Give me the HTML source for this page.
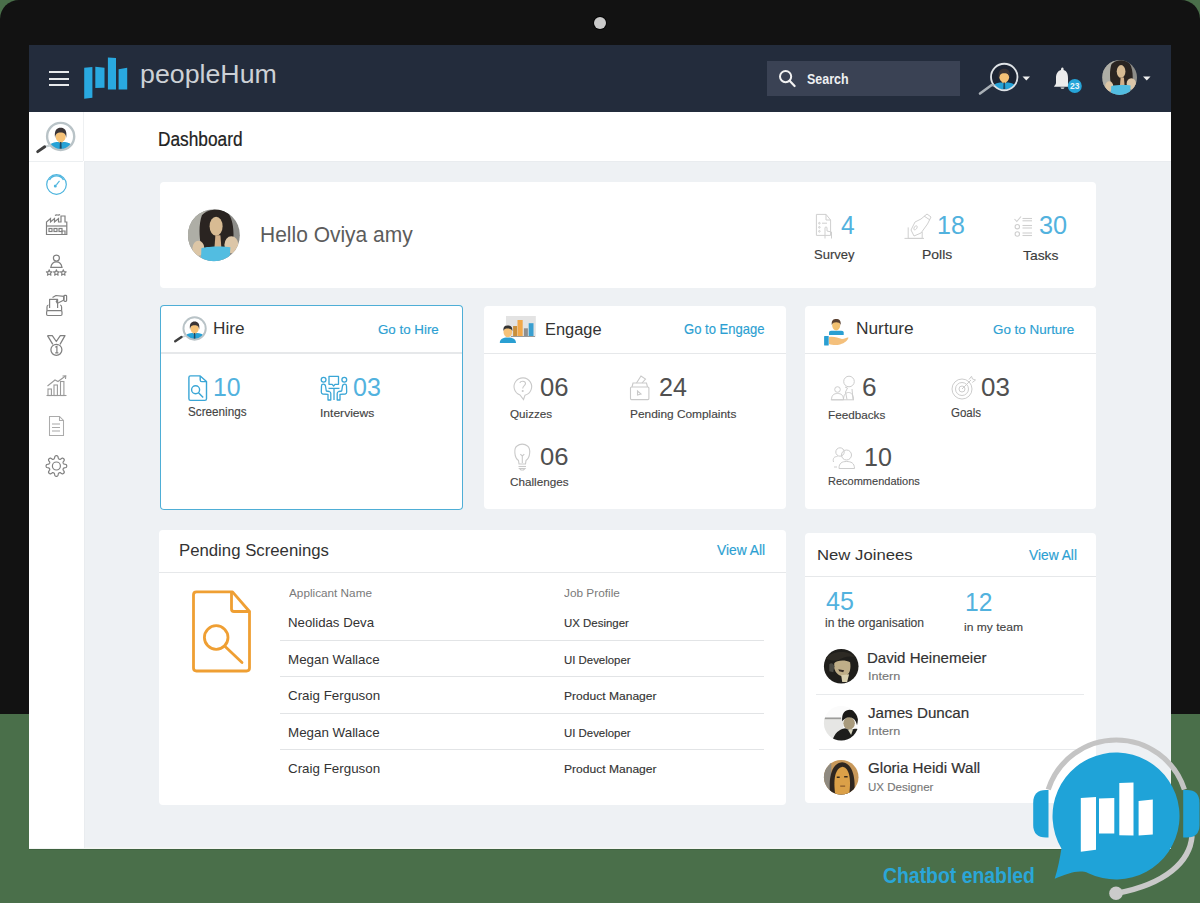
<!DOCTYPE html>
<html><head><meta charset="utf-8"><style>
html,body{margin:0;padding:0}
body{width:1200px;height:903px;position:relative;overflow:hidden;background:#4a6f4a;font-family:"Liberation Sans",sans-serif}
.a{position:absolute}
.t{position:absolute;white-space:nowrap;transform-origin:0 0}
svg{position:absolute;overflow:visible}
</style></head><body>
<div class="a" style="left:0px;top:0px;width:1200px;height:714px;background:#121212;border-radius:19px 19px 0 0"></div>
<div class="a" style="left:594px;top:17px;width:12px;height:12px;border-radius:50%;background:#c9c9c9;box-shadow:0 0 0 1px #050505"></div>
<div class="a" style="left:29px;top:45px;width:1142px;height:803px;background:#eef1f4"></div>
<div class="a" style="left:29px;top:847px;width:1142px;height:1.5px;background:#f3f5f3"></div>
<div class="a" style="left:29px;top:848.5px;width:1142px;height:1.0px;background:#3f6240"></div>
<div class="a" style="left:29px;top:45px;width:1142px;height:67px;background:#232c3c"></div>
<div class="a" style="left:29px;top:112px;width:55px;height:736px;background:#fff;border-right:1px solid #e9ecef"></div>
<div class="a" style="left:29px;top:161px;width:54px;height:1px;background:#eceff1"></div>
<div class="a" style="left:83px;top:112px;width:1px;height:49px;background:#eef0f2"></div>
<div class="a" style="left:84px;top:160.5px;width:1087px;height:1.5px;background:#e9ecef"></div>
<div class="a" style="left:84px;top:112px;width:1087px;height:49px;background:#fff"></div>
<div class="a" style="left:160px;top:182px;width:936px;height:106px;background:#fff;border-radius:4px;"></div>
<div class="a" style="left:160px;top:305px;width:303px;height:205px;background:#fff;border-radius:4px;box-shadow:inset 0 0 0 1px #4eaed6;"></div>
<div class="a" style="left:161px;top:352px;width:301px;height:1.5px;background:#e6e8ea"></div>
<div class="a" style="left:484px;top:306px;width:302px;height:203px;background:#fff;border-radius:4px;"></div>
<div class="a" style="left:484px;top:352.5px;width:302px;height:1.5px;background:#e6e8ea"></div>
<div class="a" style="left:805px;top:306px;width:291px;height:203px;background:#fff;border-radius:4px;"></div>
<div class="a" style="left:805px;top:352.5px;width:291px;height:1.5px;background:#e6e8ea"></div>
<div class="a" style="left:159px;top:530px;width:627px;height:275px;background:#fff;border-radius:4px;"></div>
<div class="a" style="left:159px;top:571.5px;width:627px;height:1.5px;background:#e6e8ea"></div>
<div class="a" style="left:805px;top:533px;width:291px;height:270px;background:#fff;border-radius:4px;"></div>
<div class="a" style="left:805px;top:575.5px;width:291px;height:1.5px;background:#e6e8ea"></div>
<div class="a" style="left:49px;top:71px;width:20px;height:2px;background:#e8eaec"></div>
<div class="a" style="left:49px;top:77.5px;width:20px;height:2.0px;background:#e8eaec"></div>
<div class="a" style="left:49px;top:84px;width:20px;height:2px;background:#e8eaec"></div>
<div class="a" style="left:767px;top:61px;width:193px;height:35px;background:#3a4254"></div>
<span class="t" style="left:806.64px;top:71.64px;font-size:14.48px;line-height:14.48px;color:#eef0f2;font-weight:bold;transform:scaleX(0.8618);">Search</span>
<span class="t" style="left:140.29px;top:62.05px;font-size:25.93px;line-height:25.93px;color:#cdd1d6;font-weight:normal;transform:scaleX(1.0322);">peopleHum</span>
<span class="t" style="left:157.88px;top:129.02px;font-size:20.41px;line-height:20.41px;color:#222;font-weight:normal;transform:scaleX(0.8464);-webkit-text-stroke:0.24px #222;">Dashboard</span>
<span class="t" style="left:260.28px;top:223.22px;font-size:22.90px;line-height:22.90px;color:#5c5c5c;font-weight:normal;transform:scaleX(0.9165);">Hello Oviya amy</span>
<span class="t" style="left:841.03px;top:212.92px;font-size:25.73px;line-height:25.73px;color:#52b2de;font-weight:normal;transform:scaleX(0.9563);">4</span>
<span class="t" style="left:937.30px;top:213.15px;font-size:25.93px;line-height:25.93px;color:#52b2de;font-weight:normal;transform:scaleX(0.9631);">18</span>
<span class="t" style="left:1038.84px;top:213.15px;font-size:25.93px;line-height:25.93px;color:#52b2de;font-weight:normal;transform:scaleX(0.9762);">30</span>
<span class="t" style="left:814.11px;top:248.79px;font-size:12.89px;line-height:12.89px;color:#3c3c3c;font-weight:normal;transform:scaleX(1.0121);-webkit-text-stroke:0.15px #3c3c3c;">Survey</span>
<span class="t" style="left:921.56px;top:249.19px;font-size:12.41px;line-height:12.41px;color:#3c3c3c;font-weight:normal;transform:scaleX(1.1238);-webkit-text-stroke:0.15px #3c3c3c;">Polls</span>
<span class="t" style="left:1023.19px;top:248.71px;font-size:13.10px;line-height:13.10px;color:#3c3c3c;font-weight:normal;transform:scaleX(1.0601);-webkit-text-stroke:0.16px #3c3c3c;">Tasks</span>
<span class="t" style="left:212.89px;top:320.99px;font-size:16.55px;line-height:16.55px;color:#333;font-weight:normal;transform:scaleX(1.0406);">Hire</span>
<span class="t" style="left:377.93px;top:323.66px;font-size:12.69px;line-height:12.69px;color:#2c9fd2;font-weight:normal;transform:scaleX(1.0506);-webkit-text-stroke:0.15px #2c9fd2;">Go to Hire</span>
<span class="t" style="left:212.91px;top:374.97px;font-size:25.43px;line-height:25.43px;color:#52b2de;font-weight:normal;transform:scaleX(0.9782);">10</span>
<span class="t" style="left:353.22px;top:374.97px;font-size:25.43px;line-height:25.43px;color:#52b2de;font-weight:normal;transform:scaleX(0.9860);">03</span>
<span class="t" style="left:188.27px;top:406.66px;font-size:11.86px;line-height:11.86px;color:#444;font-weight:normal;transform:scaleX(0.9866);-webkit-text-stroke:0.14px #444;">Screenings</span>
<span class="t" style="left:320.09px;top:408.23px;font-size:11.31px;line-height:11.31px;color:#444;font-weight:normal;transform:scaleX(1.0675);-webkit-text-stroke:0.14px #444;">Interviews</span>
<span class="t" style="left:544.90px;top:321.04px;font-size:17.08px;line-height:17.08px;color:#333;font-weight:normal;transform:scaleX(0.9606);">Engage</span>
<span class="t" style="left:684.35px;top:322.12px;font-size:14.33px;line-height:14.33px;color:#2c9fd2;font-weight:normal;transform:scaleX(0.9103);-webkit-text-stroke:0.17px #2c9fd2;">Go to Engage</span>
<span class="t" style="left:540.20px;top:375.17px;font-size:25.79px;line-height:25.79px;color:#505050;font-weight:normal;transform:scaleX(0.9949);">06</span>
<span class="t" style="left:658.74px;top:375.17px;font-size:25.79px;line-height:25.79px;color:#505050;font-weight:normal;transform:scaleX(0.9760);">24</span>
<span class="t" style="left:540.20px;top:444.85px;font-size:23.93px;line-height:23.93px;color:#505050;font-weight:normal;transform:scaleX(1.0723);">06</span>
<span class="t" style="left:510.25px;top:408.53px;font-size:11.31px;line-height:11.31px;color:#444;font-weight:normal;transform:scaleX(1.0322);-webkit-text-stroke:0.14px #444;">Quizzes</span>
<span class="t" style="left:629.72px;top:408.53px;font-size:11.31px;line-height:11.31px;color:#444;font-weight:normal;transform:scaleX(1.0516);-webkit-text-stroke:0.14px #444;">Pending Complaints</span>
<span class="t" style="left:510.20px;top:477.40px;font-size:11.10px;line-height:11.10px;color:#444;font-weight:normal;transform:scaleX(1.0534);-webkit-text-stroke:0.13px #444;">Challenges</span>
<span class="t" style="left:855.58px;top:321.27px;font-size:15.63px;line-height:15.63px;color:#333;font-weight:normal;transform:scaleX(1.1072);">Nurture</span>
<span class="t" style="left:993.08px;top:322.98px;font-size:13.61px;line-height:13.61px;color:#2c9fd2;font-weight:normal;transform:scaleX(0.9856);-webkit-text-stroke:0.16px #2c9fd2;">Go to Nurture</span>
<span class="t" style="left:862.46px;top:375.27px;font-size:25.79px;line-height:25.79px;color:#505050;font-weight:normal;transform:scaleX(1.0178);">6</span>
<span class="t" style="left:981.49px;top:375.17px;font-size:25.79px;line-height:25.79px;color:#505050;font-weight:normal;transform:scaleX(1.0062);">03</span>
<span class="t" style="left:864.09px;top:444.71px;font-size:24.86px;line-height:24.86px;color:#505050;font-weight:normal;transform:scaleX(1.0088);">10</span>
<span class="t" style="left:828.14px;top:408.58px;font-size:11.72px;line-height:11.72px;color:#444;font-weight:normal;transform:scaleX(0.9987);-webkit-text-stroke:0.14px #444;">Feedbacks</span>
<span class="t" style="left:951.12px;top:406.84px;font-size:12.00px;line-height:12.00px;color:#444;font-weight:normal;transform:scaleX(0.9600);-webkit-text-stroke:0.14px #444;">Goals</span>
<span class="t" style="left:828.20px;top:476.36px;font-size:11.03px;line-height:11.03px;color:#444;font-weight:normal;transform:scaleX(0.9990);-webkit-text-stroke:0.13px #444;">Recommendations</span>
<span class="t" style="left:178.63px;top:543.17px;font-size:16.69px;line-height:16.69px;color:#333;font-weight:normal;transform:scaleX(1.0039);">Pending Screenings</span>
<span class="t" style="left:717.44px;top:543.21px;font-size:14.76px;line-height:14.76px;color:#2c9fd2;font-weight:normal;transform:scaleX(0.9353);-webkit-text-stroke:0.18px #2c9fd2;">View All</span>
<span class="t" style="left:288.73px;top:587.81px;font-size:11.45px;line-height:11.45px;color:#7a7a7a;font-weight:normal;transform:scaleX(1.0276);">Applicant Name</span>
<span class="t" style="left:564.41px;top:588.01px;font-size:11.45px;line-height:11.45px;color:#7a7a7a;font-weight:normal;transform:scaleX(1.0338);">Job Profile</span>
<span class="t" style="left:287.91px;top:616.29px;font-size:13.24px;line-height:13.24px;color:#333;font-weight:normal;transform:scaleX(0.9997);">Neolidas Deva</span>
<span class="t" style="left:563.72px;top:618.16px;font-size:11.03px;line-height:11.03px;color:#333;font-weight:normal;transform:scaleX(1.0385);-webkit-text-stroke:0.13px #333;">UX Desinger</span>
<div class="a" style="left:280px;top:640px;width:484px;height:1px;background:#e2e4e6"></div>
<span class="t" style="left:287.90px;top:652.84px;font-size:13.24px;line-height:13.24px;color:#333;font-weight:normal;transform:scaleX(1.0101);">Megan Wallace</span>
<span class="t" style="left:563.72px;top:654.71px;font-size:11.03px;line-height:11.03px;color:#333;font-weight:normal;transform:scaleX(1.0352);-webkit-text-stroke:0.13px #333;">UI Developer</span>
<div class="a" style="left:280px;top:676px;width:484px;height:1px;background:#e2e4e6"></div>
<span class="t" style="left:288.32px;top:689.39px;font-size:13.24px;line-height:13.24px;color:#333;font-weight:normal;transform:scaleX(1.0098);">Craig Ferguson</span>
<span class="t" style="left:563.61px;top:691.26px;font-size:11.03px;line-height:11.03px;color:#333;font-weight:normal;transform:scaleX(1.0950);-webkit-text-stroke:0.13px #333;">Product Manager</span>
<div class="a" style="left:280px;top:713px;width:484px;height:1px;background:#e2e4e6"></div>
<span class="t" style="left:287.90px;top:725.94px;font-size:13.24px;line-height:13.24px;color:#333;font-weight:normal;transform:scaleX(1.0101);">Megan Wallace</span>
<span class="t" style="left:563.72px;top:727.81px;font-size:11.03px;line-height:11.03px;color:#333;font-weight:normal;transform:scaleX(1.0352);-webkit-text-stroke:0.13px #333;">UI Developer</span>
<div class="a" style="left:280px;top:749px;width:484px;height:1px;background:#e2e4e6"></div>
<span class="t" style="left:288.32px;top:762.49px;font-size:13.24px;line-height:13.24px;color:#333;font-weight:normal;transform:scaleX(1.0098);">Craig Ferguson</span>
<span class="t" style="left:563.61px;top:764.36px;font-size:11.03px;line-height:11.03px;color:#333;font-weight:normal;transform:scaleX(1.0950);-webkit-text-stroke:0.13px #333;">Product Manager</span>
<span class="t" style="left:817.43px;top:547.42px;font-size:15.45px;line-height:15.45px;color:#333;font-weight:normal;transform:scaleX(1.0818);">New Joinees</span>
<span class="t" style="left:1029.19px;top:547.53px;font-size:14.14px;line-height:14.14px;color:#2c9fd2;font-weight:normal;transform:scaleX(0.9743);-webkit-text-stroke:0.17px #2c9fd2;">View All</span>
<span class="t" style="left:825.67px;top:589.22px;font-size:25.44px;line-height:25.44px;color:#52b2de;font-weight:normal;transform:scaleX(0.9857);">45</span>
<span class="t" style="left:965.13px;top:589.53px;font-size:25.07px;line-height:25.07px;color:#52b2de;font-weight:normal;transform:scaleX(0.9810);">12</span>
<span class="t" style="left:825.44px;top:617.28px;font-size:12.07px;line-height:12.07px;color:#444;font-weight:normal;transform:scaleX(1.0048);-webkit-text-stroke:0.14px #444;">in the organisation</span>
<span class="t" style="left:964.19px;top:620.58px;font-size:11.72px;line-height:11.72px;color:#444;font-weight:normal;transform:scaleX(1.0310);-webkit-text-stroke:0.14px #444;">in my team</span>
<span class="t" style="left:867.47px;top:650.66px;font-size:14.34px;line-height:14.34px;color:#333;font-weight:normal;transform:scaleX(1.0497);-webkit-text-stroke:0.17px #333;">David Heinemeier</span>
<span class="t" style="left:867.54px;top:670.68px;font-size:11.48px;line-height:11.48px;color:#777;font-weight:normal;transform:scaleX(1.0995);-webkit-text-stroke:0.14px #777;">Intern</span>
<div class="a" style="left:816px;top:694px;width:268px;height:1px;background:#e8eaec"></div>
<span class="t" style="left:868.46px;top:705.72px;font-size:14.39px;line-height:14.39px;color:#333;font-weight:normal;transform:scaleX(1.0558);-webkit-text-stroke:0.17px #333;">James Duncan</span>
<span class="t" style="left:867.54px;top:726.20px;font-size:11.34px;line-height:11.34px;color:#777;font-weight:normal;transform:scaleX(1.1136);-webkit-text-stroke:0.14px #777;">Intern</span>
<div class="a" style="left:819px;top:749px;width:265px;height:1px;background:#e8eaec"></div>
<span class="t" style="left:867.94px;top:761.29px;font-size:14.07px;line-height:14.07px;color:#333;font-weight:normal;transform:scaleX(1.0771);-webkit-text-stroke:0.17px #333;">Gloria Heidi Wall</span>
<span class="t" style="left:867.81px;top:781.56px;font-size:11.03px;line-height:11.03px;color:#777;font-weight:normal;transform:scaleX(1.0483);-webkit-text-stroke:0.13px #777;">UX Designer</span>
<span class="t" style="left:883.20px;top:865.29px;font-size:22.34px;line-height:22.34px;color:#2aa6d8;font-weight:bold;transform:scaleX(0.8688);">Chatbot enabled</span>
<svg style="left:0;top:0" width="1200" height="903" viewBox="0 0 1200 903"><path d="M84.2,67.8 L92.4,67.1 L92.4,97.8 L84.2,98.7 Z" fill="#29a9e0"/><path d="M95.3,66.7 L104.5,67.8 L104.5,87.7 L95.3,88 Z" fill="#29a9e0"/><path d="M107.9,57.5 L116,58 L116,89.4 L107.9,89.4 Z" fill="#29a9e0"/><path d="M118.6,69.3 L127.2,67.8 L127.2,89.4 L118.6,89.4 Z" fill="#29a9e0"/><circle cx="785.6" cy="76.6" r="5.6" fill="none" stroke="#f2f2f2" stroke-width="2"/><line x1="789.6" y1="80.8" x2="794.6" y2="86" stroke="#f2f2f2" stroke-width="2.2" stroke-linecap="round"/><g transform="translate(1004.25,77) scale(1.0178571428571428)"><clipPath id="c1004_77"><circle r="12.6"/></clipPath><circle r="13" fill="#1c2433"/><g clip-path="url(#c1004_77)"><path d="M-11,16 L-10.5,8.5 C-9.5,6.3 -6,5.5 -3,5.3 L3,5.3 C6,5.5 9.5,6.3 10.5,8.5 L11,16 Z" fill="#27a2d6"/><rect x="-1.8" y="3" width="3.6" height="3" fill="#e9ad62"/><ellipse cx="0" cy="0.3" rx="4.8" ry="5.3" fill="#f6c277"/><path d="M-5.3,1.5 C-6.5,-6 -3.5,-8.2 0,-8.2 C3.5,-8.2 6.5,-6 5.3,1.5 C5,-2.5 3.5,-3.8 0,-3.8 C-3.5,-3.8 -5,-2.5 -5.3,1.5 Z" fill="#3a3436"/><path d="M-0.7,5.3 L0.7,5.3 L1.1,14 L-1.1,14 Z" fill="#1d4a66"/></g><circle r="13" fill="none" stroke="#dfe3e7" stroke-width="1.8"/><line x1="-9.8" y1="8.6" x2="-12.3" y2="7.9" stroke="#a9b0b6" stroke-width="2"/><line x1="-12.3" y1="7.9" x2="-23.8" y2="16.2" stroke="#a9b0b6" stroke-width="2.6" stroke-linecap="round"/></g><path d="M1022.5,76.5 L1030,76.5 L1026.25,80.5 Z" fill="#f0f0f0"/><path d="M1062.4,67.5 C1063.6,67.5 1063.8,69 1063.6,70 C1067,71 1068,74 1068,78 L1068,83 C1068,84.5 1069.5,85.5 1070,86.7 L1054,86.7 C1054.5,85.5 1056,84.5 1056,83 L1056,78 C1056,74 1057.5,71 1061,70 C1060.9,69 1061.2,67.5 1062.4,67.5 Z" fill="#ececec"/><path d="M1060.5,87.5 L1064.5,87.5 C1064.5,89.2 1060.5,89.2 1060.5,87.5 Z" fill="#ececec"/><circle cx="1074.8" cy="86" r="7" fill="#26a4d8"/><text x="1074.8" y="89" font-family="Liberation Sans" font-size="8.5" font-weight="bold" fill="#e9f6fc" text-anchor="middle">23</text><path d="M1143,76.5 L1150.5,76.5 L1146.75,80.5 Z" fill="#f0f0f0"/><g transform="translate(1119.6,77.5) scale(0.6692307692307692)"><clipPath id="wh"><circle r="26"/></clipPath><g clip-path="url(#wh)"><rect x="-26" y="-26" width="52" height="52" fill="#8d8d89"/><path d="M-26,-26 L-8,-26 L-12,26 L-26,26 Z" fill="#aeaea6"/><path d="M-12,-20 C-6,-27 10,-28 15,-21 C19,-15 20,-5 19.5,3 C18.5,10 15,13 12,14 L-1,16 C-7,18 -12,16 -13,10 C-15,0 -15,-12 -12,-20 Z" fill="#2a2421"/><ellipse cx="2.2" cy="-9" rx="6.5" ry="9.5" fill="#d8bb93"/><path d="M1.5,0 L6.5,0 L7.5,13 L0.5,13 Z" fill="#d2b08a"/><ellipse cx="-15.5" cy="13" rx="6" ry="7.5" fill="#dcc6a6"/><ellipse cx="17.5" cy="9.5" rx="7" ry="8.5" fill="#dcc6a8"/><path d="M-13,27 L-12.5,13 C-6,11 10,11 16.5,12 L15.5,27 Z" fill="#52bde1"/></g></g><g transform="translate(213.9,235.2) scale(1.0)"><clipPath id="wg"><circle r="26"/></clipPath><g clip-path="url(#wg)"><rect x="-26" y="-26" width="52" height="52" fill="#8d8d89"/><path d="M-26,-26 L-8,-26 L-12,26 L-26,26 Z" fill="#aeaea6"/><path d="M-12,-20 C-6,-27 10,-28 15,-21 C19,-15 20,-5 19.5,3 C18.5,10 15,13 12,14 L-1,16 C-7,18 -12,16 -13,10 C-15,0 -15,-12 -12,-20 Z" fill="#2a2421"/><ellipse cx="2.2" cy="-9" rx="6.5" ry="9.5" fill="#d8bb93"/><path d="M1.5,0 L6.5,0 L7.5,13 L0.5,13 Z" fill="#d2b08a"/><ellipse cx="-15.5" cy="13" rx="6" ry="7.5" fill="#dcc6a6"/><ellipse cx="17.5" cy="9.5" rx="7" ry="8.5" fill="#dcc6a8"/><path d="M-13,27 L-12.5,13 C-6,11 10,11 16.5,12 L15.5,27 Z" fill="#52bde1"/></g></g><g transform="translate(60.65,136.4) scale(1.042857142857143)"><clipPath id="c60_136"><circle r="12.6"/></clipPath><g clip-path="url(#c60_136)"><path d="M-11,16 L-10.5,8.5 C-9.5,6.3 -6,5.5 -3,5.3 L3,5.3 C6,5.5 9.5,6.3 10.5,8.5 L11,16 Z" fill="#27a2d6"/><rect x="-1.8" y="3" width="3.6" height="3" fill="#e9ad62"/><ellipse cx="0" cy="0.3" rx="4.8" ry="5.3" fill="#f6c277"/><path d="M-5.3,1.5 C-6.5,-6 -3.5,-8.2 0,-8.2 C3.5,-8.2 6.5,-6 5.3,1.5 C5,-2.5 3.5,-3.8 0,-3.8 C-3.5,-3.8 -5,-2.5 -5.3,1.5 Z" fill="#3a3436"/><path d="M-0.7,5.3 L0.7,5.3 L1.1,14 L-1.1,14 Z" fill="#1d4a66"/></g><circle r="13" fill="none" stroke="#b9c3c7" stroke-width="2.3"/><line x1="-9.8" y1="8.6" x2="-15.3" y2="9.9" stroke="#c9d1d4" stroke-width="2"/><line x1="-15.3" y1="9.9" x2="-22" y2="14.6" stroke="#3f3f3f" stroke-width="2.8" stroke-linecap="round"/></g><circle cx="56.5" cy="184.5" r="9.8" fill="none" stroke="#4cb4de" stroke-width="1.2"/><path d="M49.5,180 A8,8 0 0 1 63.5,180" fill="none" stroke="#4cb4de" stroke-width="1.4"/><circle cx="55.3" cy="186" r="1.5" fill="#4cb4de"/><line x1="56.4" y1="184.8" x2="59.5" y2="180.8" stroke="#4cb4de" stroke-width="1.1"/><g fill="none" stroke="#808080" stroke-width="1.2"><path d="M46.5,234.5 L46.5,222 L50.5,218.5 L50.5,222 L54.5,218.5 L54.5,222 L58.5,218.5 L58.5,222 L61,222 L61,216 L65,216 L65,222 L66.8,222 L66.8,234.5 Z"/><line x1="46.5" y1="226" x2="66.8" y2="226"/><rect x="49" y="228.5" width="3" height="3"/><rect x="54" y="228.5" width="3" height="3"/><rect x="59" y="228.5" width="3" height="3"/><path d="M62,234.5 L62,231 L65,231 L65,234.5"/><path d="M55,215.5 C57,214 58,216 60,214.5"/></g><g fill="none" stroke="#808080" stroke-width="1.2"><circle cx="56.4" cy="258.1" r="3"/><path d="M50.8,267.3 C51.5,263.5 53.5,261.8 56.4,261.8 C59.3,261.8 61.3,263.5 62,267.3 Z"/></g><polygon points="49.20,269.80 49.99,271.71 52.05,271.87 50.48,273.22 50.96,275.23 49.20,274.15 47.44,275.23 47.92,273.22 46.35,271.87 48.41,271.71" fill="none" stroke="#808080" stroke-width="1.1" stroke-linejoin="round"/><polygon points="56.40,269.80 57.19,271.71 59.25,271.87 57.68,273.22 58.16,275.23 56.40,274.15 54.64,275.23 55.12,273.22 53.55,271.87 55.61,271.71" fill="none" stroke="#808080" stroke-width="1.1" stroke-linejoin="round"/><polygon points="63.30,269.80 64.09,271.71 66.15,271.87 64.58,273.22 65.06,275.23 63.30,274.15 61.54,275.23 62.02,273.22 60.45,271.87 62.51,271.71" fill="none" stroke="#808080" stroke-width="1.1" stroke-linejoin="round"/><g fill="none" stroke="#808080" stroke-width="1.2" stroke-linejoin="round"><path d="M47,310.7 L47,307 Q47,305 48.5,305 M61.6,310.7 L61.6,307 Q61.6,305 60,305"/><rect x="46.6" y="310.7" width="15.4" height="4.8" rx="1.2"/><path d="M49.6,308 L49.6,299.3 L57.6,299.3 L57.6,308"/><path d="M52.5,297.5 L56,295.5 L63.8,296.3 L63.5,300.2 L58.5,302.8 L57.3,303.2 L56.2,301.5 L57.6,299.3"/><rect x="64" y="295.3" width="2.6" height="6" rx="0.8"/></g><g fill="none" stroke="#808080" stroke-width="1.25" stroke-linejoin="round"><path d="M47.5,335.6 L52.3,335.6 L56.3,341.5 L60.3,335.6 L65,335.6 L60,344.4"/><path d="M47.5,335.6 L52.8,344.4"/><circle cx="56.4" cy="349.8" r="5.5"/></g><path d="M55.3,347.3 L56.9,346.3 L56.9,352.8 M55.2,352.8 L58.4,352.8" fill="none" stroke="#808080" stroke-width="1.2"/><g fill="none" stroke="#9a9a9a" stroke-width="1.1"><line x1="46.5" y1="395.5" x2="66.5" y2="395.5"/><rect x="48" y="389" width="3.4" height="6.5"/><rect x="54" y="385" width="3.4" height="10.5"/><rect x="60.5" y="381.5" width="3.4" height="14"/><path d="M47.5,386 L55,380 L58,381.5 L65.5,376"/><path d="M62.5,376 L65.8,375.8 L65.5,379"/></g><g fill="none" stroke="#ababab" stroke-width="1.05"><path d="M49.5,416.5 L59.5,416.5 L63.5,420.5 L63.5,435.5 L49.5,435.5 Z"/><path d="M59.5,416.5 L59.5,420.5 L63.5,420.5"/><line x1="52" y1="424" x2="60" y2="424"/><line x1="52" y1="427.5" x2="60" y2="427.5"/><line x1="52" y1="431" x2="60" y2="431"/></g><polygon points="66.70,466.00 66.68,466.40 66.59,466.80 66.38,467.18 65.91,467.51 65.08,467.73 64.25,467.89 63.76,468.08 63.51,468.31 63.36,468.57 63.24,468.83 63.13,469.10 63.06,469.39 63.07,469.74 63.29,470.22 63.76,470.92 64.19,471.66 64.29,472.22 64.17,472.64 63.95,472.98 63.68,473.28 63.38,473.55 63.04,473.77 62.62,473.89 62.06,473.79 61.32,473.36 60.62,472.89 60.14,472.67 59.79,472.66 59.50,472.73 59.23,472.84 58.97,472.96 58.71,473.11 58.48,473.36 58.29,473.85 58.13,474.68 57.91,475.51 57.58,475.98 57.20,476.19 56.80,476.28 56.40,476.30 56.00,476.28 55.60,476.19 55.22,475.98 54.89,475.51 54.67,474.68 54.51,473.85 54.32,473.36 54.09,473.11 53.83,472.96 53.57,472.84 53.30,472.73 53.01,472.66 52.66,472.67 52.18,472.89 51.48,473.36 50.74,473.79 50.18,473.89 49.76,473.77 49.42,473.55 49.12,473.28 48.85,472.98 48.63,472.64 48.51,472.22 48.61,471.66 49.04,470.92 49.51,470.22 49.73,469.74 49.74,469.39 49.67,469.10 49.56,468.83 49.44,468.57 49.29,468.31 49.04,468.08 48.55,467.89 47.72,467.73 46.89,467.51 46.42,467.18 46.21,466.80 46.12,466.40 46.10,466.00 46.12,465.60 46.21,465.20 46.42,464.82 46.89,464.49 47.72,464.27 48.55,464.11 49.04,463.92 49.29,463.69 49.44,463.43 49.56,463.17 49.67,462.90 49.74,462.61 49.73,462.26 49.51,461.78 49.04,461.08 48.61,460.34 48.51,459.78 48.63,459.36 48.85,459.02 49.12,458.72 49.42,458.45 49.76,458.23 50.18,458.11 50.74,458.21 51.48,458.64 52.18,459.11 52.66,459.33 53.01,459.34 53.30,459.27 53.57,459.16 53.83,459.04 54.09,458.89 54.32,458.64 54.51,458.15 54.67,457.32 54.89,456.49 55.22,456.02 55.60,455.81 56.00,455.72 56.40,455.70 56.80,455.72 57.20,455.81 57.58,456.02 57.91,456.49 58.13,457.32 58.29,458.15 58.48,458.64 58.71,458.89 58.97,459.04 59.23,459.16 59.50,459.27 59.79,459.34 60.14,459.33 60.62,459.11 61.32,458.64 62.06,458.21 62.62,458.11 63.04,458.23 63.38,458.45 63.68,458.72 63.95,459.02 64.17,459.36 64.29,459.78 64.19,460.34 63.76,461.08 63.29,461.78 63.07,462.26 63.06,462.61 63.13,462.90 63.24,463.17 63.36,463.43 63.51,463.69 63.76,463.92 64.25,464.11 65.08,464.27 65.91,464.49 66.38,464.82 66.59,465.20 66.68,465.60" fill="none" stroke="#808080" stroke-width="1.2" stroke-linejoin="round"/><circle cx="56.4" cy="466" r="4" fill="none" stroke="#808080" stroke-width="1.2"/><g fill="none" stroke="#cfcfcf" stroke-width="1"><path d="M816.4,214.4 L826,214.4 L830.6,220 L830.6,235.4 L816.4,235.4 Z"/><path d="M826,214.4 L826,220 L830.6,220"/><circle cx="819.4" cy="223.2" r="0.8"/><circle cx="819.4" cy="227.3" r="0.8"/><circle cx="819.4" cy="231.3" r="0.8"/><line x1="822" y1="223.2" x2="827" y2="223.2"/><path d="M825,238.5 L825,228 C825,226.5 827,226.5 827,228 L827,231 L831.5,232 L831.5,238.5"/></g><g fill="none" stroke="#cfcfcf" stroke-width="1"><path d="M908.2,227.4 L908.2,238.4 L922.2,238.4 L922.2,232"/><line x1="904.5" y1="238.4" x2="924" y2="238.4"/><path d="M911,230 L915,222 L921,219 L927,214 L931,217 L927.5,224 L921,233 L914,236 Z"/><line x1="924" y1="216" x2="930" y2="220"/><path d="M914,228 C915,225 918,225 917,228 C916,230 913,231 914,228"/></g><g fill="none" stroke="#cfcfcf" stroke-width="1.1"><path d="M1014.5,219 L1016.8,221.5 L1021,216.5"/><circle cx="1017.3" cy="226.7" r="2.2"/><circle cx="1017.3" cy="234" r="2.2"/><line x1="1022.5" y1="218.5" x2="1032" y2="218.5"/><line x1="1022.5" y1="220.8" x2="1032" y2="220.8"/><line x1="1022.5" y1="225.5" x2="1032" y2="225.5"/><line x1="1022.5" y1="228" x2="1032" y2="228"/><line x1="1022.5" y1="233" x2="1032" y2="233"/><line x1="1022.5" y1="235.5" x2="1032" y2="235.5"/></g><g transform="translate(194.6,328.5) scale(0.8571428571428571)"><clipPath id="c194_328"><circle r="12.6"/></clipPath><g clip-path="url(#c194_328)"><path d="M-11,16 L-10.5,8.5 C-9.5,6.3 -6,5.5 -3,5.3 L3,5.3 C6,5.5 9.5,6.3 10.5,8.5 L11,16 Z" fill="#27a2d6"/><rect x="-1.8" y="3" width="3.6" height="3" fill="#e9ad62"/><ellipse cx="0" cy="0.3" rx="4.8" ry="5.3" fill="#f6c277"/><path d="M-5.3,1.5 C-6.5,-6 -3.5,-8.2 0,-8.2 C3.5,-8.2 6.5,-6 5.3,1.5 C5,-2.5 3.5,-3.8 0,-3.8 C-3.5,-3.8 -5,-2.5 -5.3,1.5 Z" fill="#3a3436"/><path d="M-0.7,5.3 L0.7,5.3 L1.1,14 L-1.1,14 Z" fill="#1d4a66"/></g><circle r="13" fill="none" stroke="#b9c3c7" stroke-width="2.3"/><line x1="-9.8" y1="8.6" x2="-15.3" y2="9.9" stroke="#c9d1d4" stroke-width="2"/><line x1="-15.3" y1="9.9" x2="-22.6" y2="15" stroke="#3f3f3f" stroke-width="2.8" stroke-linecap="round"/></g><g fill="none" stroke="#3aa6d6" stroke-width="1.4" stroke-linejoin="round"><path d="M190.5,375.9 L200.2,375.9 L206.5,381.6 L206.5,398.8 Q206.5,400.4 204.9,400.4 L190.5,400.4 Q188.9,400.4 188.9,398.8 L188.9,377.5 Q188.9,375.9 190.5,375.9 Z"/><path d="M200.2,375.9 L200.2,380 Q200.2,381.6 201.8,381.6 L206.5,381.6"/><circle cx="195.6" cy="389.8" r="4"/><line x1="198.5" y1="392.7" x2="203.2" y2="397.4"/></g><g fill="none" stroke="#3aa6d6" stroke-width="1.3" stroke-linejoin="round"><circle cx="323.6" cy="379.8" r="2.4"/><circle cx="344.3" cy="379.8" r="2.4"/><path d="M329,376.3 L338.5,376.3 L338.5,384.3 L335,384.3 L333.6,386 L332.2,384.3 L329,384.3 Z"/><line x1="328.5" y1="388.4" x2="339.5" y2="388.4"/><line x1="334" y1="388.4" x2="334" y2="400"/><path d="M321.5,386 Q321.5,384.2 323.3,384.2 Q325.3,384.2 325.6,386.5 L326.3,391 L329.3,391.5 Q330.8,392 330.8,393.5 L330.8,400 L328,400 L328,394.3 L322.8,394 Q321.3,393.8 321.3,392 Z"/><path d="M346.5,386 Q346.5,384.2 344.7,384.2 Q342.7,384.2 342.4,386.5 L341.7,391 L338.7,391.5 Q337.2,392 337.2,393.5 L337.2,400 L340,400 L340,394.3 L345.2,394 Q346.7,393.8 346.7,392 Z"/></g><rect x="506" y="316" width="29.8" height="20.7" fill="#e3e3e3"/><rect x="513.1" y="326" width="4" height="10" fill="#c98f3c"/><rect x="517.5" y="320" width="5.2" height="16" fill="#f1a84a"/><rect x="523.9" y="328.3" width="4" height="7.7" fill="#8f8f8f"/><rect x="528.7" y="323.2" width="4.8" height="12.8" fill="#3a9fd0"/><rect x="511" y="336" width="24" height="1" fill="#9a9a9a"/><path d="M499.8,343 C499.8,339 503,337.5 507.6,337.5 C512.5,337.5 516,339 516,343 Z" fill="#2a9fd2"/><ellipse cx="507.8" cy="332" rx="4.3" ry="5.2" fill="#f5c27a"/><path d="M503.4,331 C503,326 505.5,325.5 507.8,325.5 C510.5,325.5 512.7,326.5 512.3,331 C511.5,329 510,328.5 507.8,328.5 C505.5,328.5 504,329 503.4,331 Z" fill="#333"/><g fill="none" stroke="#c9c9c9" stroke-width="1.1"><path d="M525,395.2 A8.8,8.8 0 1 0 520,395 L523.5,399.5 Z"/><path d="M520,383 C520,380.5 525.5,380.5 525.5,383.5 C525.5,385.5 522.7,385.8 522.7,388.5"/><circle cx="522.7" cy="391" r="0.5"/></g><g fill="none" stroke="#c9c9c9" stroke-width="1.1"><rect x="630.5" y="387" width="18.4" height="12.6" rx="1"/><path d="M632,387 L633,383 L646.5,383 L647.5,387"/><path d="M636.5,383 L641,376 L645.5,379 L642,383"/><path d="M637.5,395 L637.5,391 L641,394 Z"/></g><g fill="none" stroke="#c9c9c9" stroke-width="1.1"><path d="M519,464 L518.5,460.5 C514,457.5 513.8,448 517,446 C520,443.5 524.5,443.5 527.5,446 C530.8,448.5 530.5,457.5 526,460.5 L525.5,464 Z"/><line x1="518.5" y1="466.5" x2="526" y2="466.5"/><path d="M519.5,468.5 L525,468.5 L523.5,470 L521,470 Z"/><path d="M520.3,454.2 L522.3,456 L524.3,454.2 M522.3,456 L522.3,463"/></g><path d="M829,335 L829,332.5 C829,331 830.5,330.8 833,330.8 L839.5,330.8 C842,330.8 843.7,331 843.7,332.5 L843.7,335 Z" fill="#2a9fd2"/><ellipse cx="836.2" cy="325.6" rx="4" ry="4.8" fill="#f2c070"/><path d="M831.8,325 C831.3,320 833.5,319 836.2,319 C839,319 841.2,320 840.7,325 C840,323 838.5,322.3 836.2,322.3 C834,322.3 832.5,323 831.8,325 Z" fill="#5a4030"/><rect x="824.1" y="336" width="4.6" height="9.5" rx="0.6" fill="#2a9fd2"/><path d="M829,337 C833,336 838,337.5 842,339 C845,338.5 847,337 848.5,337.5 C848,340 845,343 840,344.5 C836,345.5 832,345 829,344 Z" fill="#f4c07c"/><g fill="none" stroke="#cdcdcd" stroke-width="1"><circle cx="849" cy="381.5" r="5.3"/><path d="M845,387 L847.5,388 L845.5,392 L847,399.5 M852,389 L853,399.5"/><circle cx="837.5" cy="389.5" r="2.8"/><path d="M831.5,399.8 C831.5,395 834,393.5 837.5,393.5 C841,393.5 843.5,395 843.5,399.8 Z"/><line x1="830.8" y1="399.8" x2="854" y2="399.8"/><path d="M843.5,399.8 C843.5,395 845.5,392.5 848.5,392.5 C851.5,392.5 853.5,395 853.5,399.8"/></g><g fill="none" stroke="#cdcdcd" stroke-width="1"><circle cx="962" cy="389" r="10"/><circle cx="962" cy="389" r="6.5"/><circle cx="962" cy="389" r="3"/><line x1="962" y1="389" x2="971" y2="380"/><path d="M969,379.5 L971.5,376.3 L972.5,379 L975.5,380 L972.3,382.5"/></g><g fill="none" stroke="#cdcdcd" stroke-width="1"><circle cx="840" cy="452" r="4.2"/><path d="M833.5,462 C832.5,458 834.5,456.5 837.5,456.5 M834,467 L837,467"/><circle cx="846.5" cy="455" r="5"/><path d="M839,468.5 C839,463 842,461.5 846.5,461.5 C851,461.5 854.5,463 854.5,468.5 Z"/></g><g fill="none" stroke="#ef9f33" stroke-width="2.8" stroke-linejoin="round" stroke-linecap="round"><path d="M196.5,591.8 L232.5,591.8 L249.5,611.5 L249.5,668 Q249.5,671 246.5,671 L196.5,671 Q193.5,671 193.5,668 L193.5,594.8 Q193.5,591.8 196.5,591.8 Z"/><path d="M231.5,592.5 L231.5,609 Q231.5,611.5 234,611.5 L249,611.5"/><circle cx="216.2" cy="637.5" r="11.8"/><line x1="224.6" y1="646" x2="242" y2="662.5"/></g><g transform="translate(841.2,666.3) scale(0.9885714285714287)"><clipPath id="j1"><circle r="17.5"/></clipPath><g clip-path="url(#j1)"><rect x="-18" y="-18" width="36" height="36" fill="#1f1e1b"/><path d="M-7,-3 C-5,-6 4,-7 9,-4 C10,2 9,8 4,10 C-1,11 -6,7 -7,2 Z" fill="#bfae88"/><path d="M-12,-2 C-10,-4 -8,-3 -7,0 L-8,6 L-12,5 Z" fill="#4a4a44"/><path d="M-3,3 L3,4 L2,6 L-2,5 Z" fill="#3a3028"/><path d="M0,9 L8,8 L6,16 L1,16 Z" fill="#d8cfae"/><path d="M-16,-8 C-10,-16 8,-17 14,-9 C8,-11 2,-9 -3,-6 C-7,-5 -10,-6 -16,-8 Z" fill="#2d2a24"/></g></g><g transform="translate(841.2,723.2) scale(0.9885714285714287)"><clipPath id="j2"><circle r="17.5"/></clipPath><g clip-path="url(#j2)"><rect x="-18" y="-18" width="36" height="36" fill="#fbfbfb"/><rect x="-18" y="-4" width="20" height="22" fill="#e6e6e4"/><rect x="-17" y="-5.8" width="17" height="1.8" fill="#9c9c9a"/><ellipse cx="8" cy="0" rx="5.8" ry="6.5" fill="#a89a7c"/><path d="M1,-2 C0,-12 6,-15 12,-13 C17,-11 18,-5 16,2 C15,-3 12,-6 8,-6 C5,-6 3,-4 1,-2 Z" fill="#1b1a18"/><path d="M-9,18 C-7,10 -2,6 4,5 L8,7 C12,6 15,5 17,6 L18,18 Z" fill="#1d1d1b"/><path d="M7,7 L12,6 L10,12 Z" fill="#d9d6c0"/></g></g><g transform="translate(841.2,777.2) scale(0.9885714285714287)"><clipPath id="j3"><circle r="17.5"/></clipPath><g clip-path="url(#j3)"><rect x="-18" y="-18" width="36" height="36" fill="#c8985a"/><rect x="-18" y="-18" width="8" height="36" fill="#8f8a80"/><path d="M-11,18 C-13,4 -11,-14 1,-15 C12,-14 15,2 13,18 Z" fill="#2e2620"/><path d="M-6,18 C-8,4 -7,-9 1.5,-10.5 C9,-9 10,4 8,18 Z" fill="#dba048"/><path d="M-4.5,0 L-1.5,0 M3,-0.5 L6.5,-0.5" stroke="#3a2a1a" stroke-width="1.4"/><path d="M-1,9 L4,9" stroke="#8a5a2a" stroke-width="1.2"/></g></g><path d="M1048.2,789.5 A71.6,71.6 0 0 1 1184.4,789.5" fill="none" stroke="#c4c4c4" stroke-width="5.2"/><path d="M1192,836 C1190,862 1165,884 1118,893" fill="none" stroke="#c9c9c9" stroke-width="5.5"/><circle cx="1116" cy="893.3" r="6.8" fill="#cbcbcb"/><path d="M1046,790 L1048.5,790 L1048.5,837.6 L1046,837.6 Q1033.2,837.6 1033.2,824.8 L1033.2,802.8 Q1033.2,790 1046,790 Z" fill="#1fa3d8"/><path d="M1183.2,790 L1187,790 Q1199.5,790 1199.5,802.8 L1199.5,824.8 Q1199.5,837.6 1187,837.6 L1183.2,837.6 Z" fill="#1fa3d8"/><path d="M1061.4,848.4 A63.5,63.5 0 1 1 1088.4,873.2 C1078,869 1068,874 1054.7,878.7 C1058,868 1060,858 1061.4,848.4 Z" fill="#1fa3d8"/><path d="M1080.8,798 L1096,797 L1096,849.7 L1080.8,851.8 Z" fill="#fff"/><path d="M1099,798.5 L1114.3,798 L1114.3,833.5 L1099,833.5 Z" fill="#fff"/><path d="M1119.3,783 L1133.5,782.6 L1133.5,835.5 L1119.3,835.3 Z" fill="#fff"/><path d="M1138.6,801 L1152.8,799.5 L1152.8,834.5 L1138.6,835.5 Z" fill="#fff"/></svg>
</body></html>
